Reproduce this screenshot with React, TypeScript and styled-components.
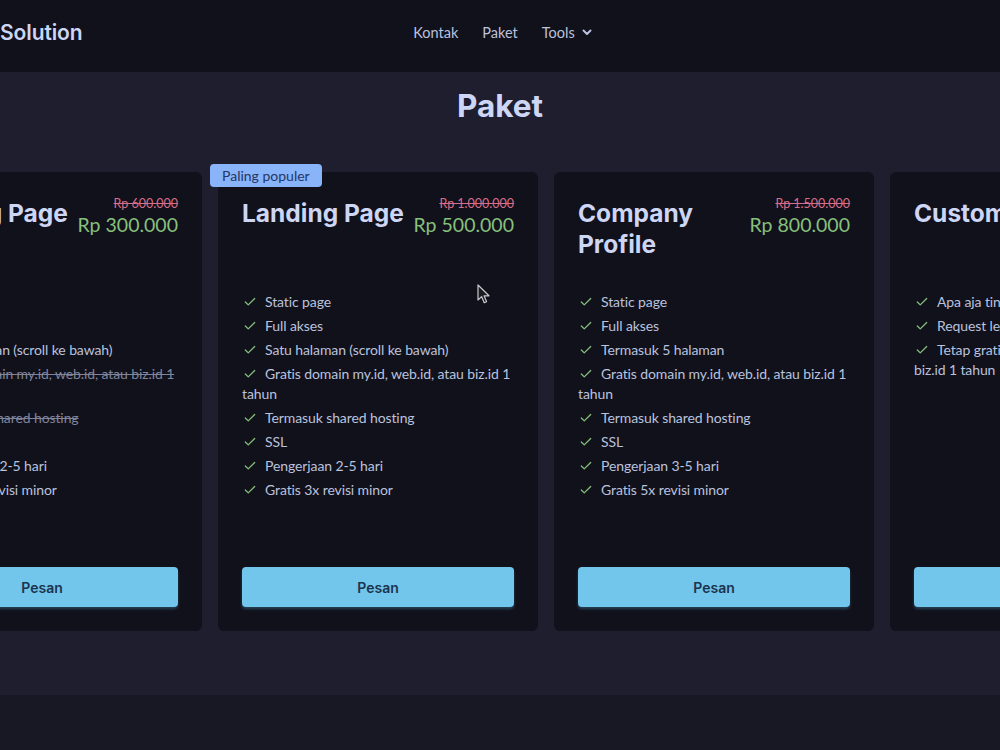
import React from "react";
import styled, { createGlobalStyle } from "styled-components";

const GlobalStyle = createGlobalStyle`
  html, body {
    margin: 0;
    padding: 0;
    background: #181825;
    overflow: hidden;
  }
  body {
    font-family: "Lato", "Noto Sans", sans-serif;
    color: #cdd6f4;
  }
  * { box-sizing: border-box; }
`;

const Page = styled.div`
  position: relative;
  width: 1000px;
  height: 750px;
  overflow: hidden;
  background: #181825;
`;

const Header = styled.header`
  height: 72px;
  padding-bottom: 8px;
  background: #11111b;
  display: grid;
  grid-template-columns: 1fr auto 1fr;
  align-items: center;
`;

const Brand = styled.div`
  font-family: "Inter", sans-serif;
  font-size: 21px;
  font-weight: 600;
  color: #cdd6f4;
  letter-spacing: -0.1px;
`;

const Nav = styled.nav`
  display: flex;
  align-items: center;
  gap: 24px;
  margin-left: 6px;
`;

const NavLink = styled.a`
  display: inline-flex;
  align-items: center;
  gap: 6px;
  font-size: 14.5px;
  color: #bac2de;
  text-decoration: none;
`;

const Section = styled.section`
  background: #1e1e2e;
  height: 623px;
  padding: 16px 0 64px;
  overflow: hidden;
`;

const Title = styled.h1`
  margin: 0 0 48px;
  font-family: "Inter", sans-serif;
  font-size: 31.5px;
  line-height: 36px;
  font-weight: 700;
  text-align: center;
  color: #cdd6f4;
`;

const CardRow = styled.div`
  display: flex;
  gap: 16px;
  width: max-content;
  margin-left: -118px;
`;

const Card = styled.article`
  position: relative;
  width: 320px;
  height: 459px;
  padding: 24px;
  background: #11111b;
  border-radius: 6px;
  display: flex;
  flex-direction: column;
`;

const Badge = styled.span`
  position: absolute;
  top: -8px;
  left: -8px;
  padding: 3px 12px;
  background: #89b4fa;
  color: #243764;
  font-size: 14px;
  line-height: 17px;
  border-radius: 4px;
`;

const CardHead = styled.div`
  display: flex;
  justify-content: space-between;
  align-items: flex-start;
  gap: 4px;
  min-height: 64px;
`;

const PlanName = styled.h2`
  margin: 0;
  padding-top: 2px;
  font-family: "Inter", sans-serif;
  font-size: 24.5px;
  line-height: 31px;
  font-weight: 700;
  color: #cdd6f4;
`;

const PriceBox = styled.div`
  flex-shrink: 0;
  display: flex;
  flex-direction: column;
  align-items: flex-end;
  white-space: nowrap;
`;

const OldPrice = styled.s`
  font-size: 12.5px;
  line-height: 15px;
  color: #d66d89;
`;

const NewPrice = styled.span`
  font-size: 19.5px;
  line-height: 27px;
  color: #86c07c;
`;

const Features = styled.ul`
  list-style: none;
  margin: 32px 0 0;
  padding: 0;
  display: flex;
  flex-direction: column;
  gap: 4px;
  flex: 1;
`;

const Feature = styled.li<{ $off?: boolean }>`
  font-size: 14px;
  line-height: 20px;
  letter-spacing: -0.1px;
  color: ${(p) => (p.$off ? "#7f849c" : "#bac2de")};
  text-decoration: ${(p) => (p.$off ? "line-through" : "none")};
`;

const Mark = styled.svg<{ $off?: boolean }>`
  width: 14px;
  height: 14px;
  margin: 0 8px 0 1px;
  vertical-align: -2px;
  color: ${(p) => (p.$off ? "#7f849c" : "#86c07c")};
`;

const OrderButton = styled.button`
  height: 40px;
  width: 100%;
  border: none;
  border-radius: 4px;
  background: #72c6ec;
  color: #1b3550;
  font-family: "Inter", sans-serif;
  font-size: 14px;
  font-weight: 600;
  box-shadow: 0 2px 3px rgba(80, 160, 200, 0.35);
  cursor: pointer;
`;

const Pointer = styled.svg`
  position: absolute;
  left: 477px;
  top: 284px;
  width: 14px;
  height: 21px;
  pointer-events: none;
`;

type Item = { text: string; off?: boolean };
type Plan = {
  name: string;
  oldPrice: string;
  price: string;
  popular?: boolean;
  items: Item[];
};

const plans: Plan[] = [
  {
    name: "Landing Page",
    oldPrice: "Rp 600.000",
    price: "Rp 300.000",
    items: [
      { text: "Static page" },
      { text: "Full akses" },
      { text: "Satu halaman (scroll ke bawah)" },
      { text: "Gratis domain my.id, web.id, atau biz.id 1 tahun", off: true },
      { text: "Termasuk shared hosting", off: true },
      { text: "SSL", off: true },
      { text: "Pengerjaan 2-5 hari" },
      { text: "Gratis 1x revisi minor" },
    ],
  },
  {
    name: "Landing Page",
    oldPrice: "Rp 1.000.000",
    price: "Rp 500.000",
    popular: true,
    items: [
      { text: "Static page" },
      { text: "Full akses" },
      { text: "Satu halaman (scroll ke bawah)" },
      { text: "Gratis domain my.id, web.id, atau biz.id 1 tahun" },
      { text: "Termasuk shared hosting" },
      { text: "SSL" },
      { text: "Pengerjaan 2-5 hari" },
      { text: "Gratis 3x revisi minor" },
    ],
  },
  {
    name: "Company Profile",
    oldPrice: "Rp 1.500.000",
    price: "Rp 800.000",
    items: [
      { text: "Static page" },
      { text: "Full akses" },
      { text: "Termasuk 5 halaman" },
      { text: "Gratis domain my.id, web.id, atau biz.id 1 tahun" },
      { text: "Termasuk shared hosting" },
      { text: "SSL" },
      { text: "Pengerjaan 3-5 hari" },
      { text: "Gratis 5x revisi minor" },
    ],
  },
  {
    name: "Custom",
    oldPrice: "",
    price: "Hubungi kami",
    items: [
      { text: "Apa aja tinggal bilang" },
      { text: "Request lebih fleksibel" },
      { text: "Tetap gratis domain my.id, web.id, atau biz.id 1 tahun" },
    ],
  },
];

const FeatureMark = ({ off }: { off?: boolean }) => (
  <Mark $off={off} viewBox="0 0 24 24" fill="none" stroke="currentColor" strokeWidth={2.2} strokeLinecap="round" strokeLinejoin="round">
    {off ? <path d="M18 6 6 18M6 6l12 12" /> : <path d="M20 6 9 17l-5-5" />}
  </Mark>
);

const Chevron = () => (
  <svg width="12" height="12" viewBox="0 0 24 24" fill="none" stroke="currentColor" strokeWidth={4} strokeLinecap="round" strokeLinejoin="round">
    <path d="m5 9 7 7 7-7" />
  </svg>
);

export default function App() {
  return (
    <Page>
      <GlobalStyle />
      <Header>
        <Brand>Solution</Brand>
        <Nav>
          <NavLink href="#kontak">Kontak</NavLink>
          <NavLink href="#paket">Paket</NavLink>
          <NavLink href="#tools">
            Tools <Chevron />
          </NavLink>
        </Nav>
        <div />
      </Header>
      <Section id="paket">
        <Title>Paket</Title>
        <CardRow>
          {plans.map((plan, i) => (
            <Card key={i}>
              {plan.popular && <Badge>Paling populer</Badge>}
              <CardHead>
                <PlanName>{plan.name}</PlanName>
                <PriceBox>
                  {plan.oldPrice && <OldPrice>{plan.oldPrice}</OldPrice>}
                  <NewPrice>{plan.price}</NewPrice>
                </PriceBox>
              </CardHead>
              <Features>
                {plan.items.map((item, j) => (
                  <Feature key={j} $off={item.off}>
                    <FeatureMark off={item.off} />
                    {item.text}
                  </Feature>
                ))}
              </Features>
              <OrderButton>Pesan</OrderButton>
            </Card>
          ))}
        </CardRow>
      </Section>
      <Pointer viewBox="0 0 14 21">
        <path d="M1 1 L1 16 L4.6 12.6 L7.2 18.8 L9.6 17.8 L7.1 11.8 L12 11.8 Z" fill="#1b1b22" stroke="#c8c8cc" strokeWidth="1.2" strokeLinejoin="round" />
      </Pointer>
    </Page>
  );
}
